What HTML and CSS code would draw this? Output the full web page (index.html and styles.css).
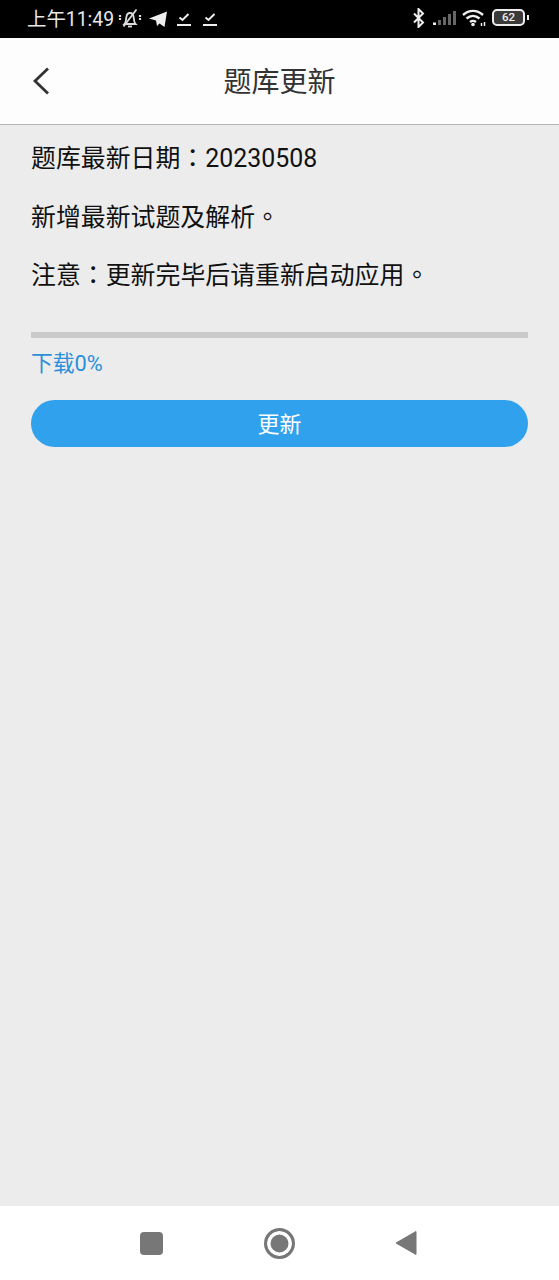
FILE: index.html
```html
<!DOCTYPE html>
<html lang="zh-CN">
<head>
  <meta charset="UTF-8">
  <meta name="viewport" content="width=device-width, initial-scale=1.0">
  <title>题库更新</title>
  <link rel="stylesheet" href="styles.css">
</head>
<body>

  <!-- Status bar -->
  <div class="status-bar">
    <div class="status-left">
      <span class="status-time">上午11:49</span>
      <svg class="ic-bell" width="24" height="22" viewBox="0 0 24 22" fill="none" stroke="#ddd" stroke-width="1.800">
        <path d="M6.500 16c1.500-1.500 1.500-4 1.800-6.500C8.600 6.500 10 5 12 5s3.400 1.500 3.700 4.500c.3 2.500.3 5 1.800 6.500z"/>
        <path d="M10 18.500h4"/>
        <path d="M5.500 18.500L18.500 1.500"/>
        <path d="M2 7v6M22 7v6" stroke-width="2.200" stroke-dasharray="2 1"/>
      </svg>
      <svg class="ic-send" width="18" height="16" viewBox="0 0 18 16">
        <path d="M0 7.500L18 0.500 15.500 16l-5-3.500-2.500 2.500-1-5.500z" fill="#eee"/>
      </svg>
      <svg class="ic-check" width="14" height="16" viewBox="0 0 14 16" fill="none" stroke="#eee" stroke-width="2">
        <path d="M2.500 6.500l3 2.500L11.500 3"/>
        <path d="M0 14h14"/>
      </svg>
      <svg class="ic-check" width="14" height="16" viewBox="0 0 14 16" fill="none" stroke="#eee" stroke-width="2">
        <path d="M2.500 6.500l3 2.500L11.500 3"/>
        <path d="M0 14h14"/>
      </svg>
    </div>
    <div class="status-right">
      <svg width="14" height="20" viewBox="0 0 14 20" fill="none" stroke="#eee" stroke-width="2">
        <path d="M2 5.500l9 9-4.500 4.500V1l4.500 4.500-9 9"/>
      </svg>
      <svg width="24" height="16" viewBox="0 0 24 16" fill="#666">
        <rect x="1" y="12.500" width="3" height="2.500" fill="#eee"/>
        <rect x="6" y="10" width="3" height="5"/>
        <rect x="11" y="7" width="3" height="8"/>
        <rect x="16" y="4" width="3" height="11"/>
        <rect x="21" y="1" width="3" height="14"/>
      </svg>
      <svg width="24" height="18" viewBox="0 0 24 18" fill="none" stroke="#eee" stroke-width="2.400">
        <path d="M1 6c6-5.500 14-5.500 20 0"/>
        <path d="M4.500 9.500c4-3.500 9-3.500 13 0"/>
        <path d="M8 13c2-1.500 4-1.500 6 0"/>
        <circle cx="11" cy="15.500" r="1.800" fill="#eee" stroke="none"/>
        <path d="M19.500 14v3M22.500 13v4" stroke-width="1.500"/>
      </svg>
      <div class="battery">
        <span class="battery-body">62</span>
        <span class="battery-tip"></span>
      </div>
    </div>
  </div>

  <!-- Title bar -->
  <header class="title-bar">
    <svg class="back-icon" width="18" height="28" viewBox="0 0 18 28" fill="none" stroke="#333" stroke-width="2.800">
      <path d="M16 1.500L3 14l13 12.500"/>
    </svg>
    <h1>题库更新</h1>
  </header>

  <main class="content">
    <p class="line">题库最新日期<span class="punct" lang="zh-Hant">：</span>20230508</p>
    <p class="line">新增最新试题及解析<span class="punct" lang="zh-Hant">。</span></p>
    <p class="line">注意<span class="punct" lang="zh-Hant">：</span>更新完毕后请重新启动应用<span class="punct" lang="zh-Hant">。</span></p>

    <div class="progress"></div>
    <div class="progress-label">下载0%</div>
    <button class="update-btn">更新</button>
  </main>

  <!-- Android nav -->
  <nav class="nav-bar">
    <span class="nav-square"></span>
    <span class="nav-home"></span>
    <svg width="22" height="26" viewBox="0 0 22 26">
      <path d="M1 13L21 1.500v23z" fill="#777" stroke="#777" stroke-linejoin="round"/>
    </svg>
  </nav>

</body>
</html>
```

FILE: styles.css
```css
* {
  box-sizing: border-box;
}

body {
  margin: 0;
  height: 1280px;
  display: flex;
  flex-direction: column;
  background: #ececec;
  font-family: "Roboto", "Noto Sans CJK SC", sans-serif;
}

.status-bar {
  height: 38px;
  background: #000;
  color: #e8e8e8;
  display: flex;
  justify-content: space-between;
  align-items: center;
  padding: 0 30px 3px 27px;
}

.status-left,
.status-right {
  display: flex;
  align-items: center;
}

.status-left {
  gap: 4px;
}

.status-time {
  font-size: 19.4px;
}

.ic-bell {
  margin-top: 2px;
}

.ic-send {
  margin: 3px 0 0 3px;
}

.ic-check {
  margin: 3px 0 0 6px;
}

.ic-check + .ic-check {
  margin-left: 8px;
}

.status-right {
  gap: 6px;
}

.battery {
  display: flex;
  align-items: center;
  gap: 2px;
}

.battery-body {
  width: 33px;
  height: 17px;
  border: 2px solid #eee;
  border-radius: 5px;
  font-size: 11.500px;
  font-weight: 500;
  line-height: 13px;
  text-align: center;
  color: #eee;
  background: #3a3a3a;
}

.battery-tip {
  width: 2px;
  height: 5px;
  background: #eee;
}

.title-bar {
  height: 87px;
  background: #fdfdfd;
  border-bottom: 1px solid #b4b4b4;
  display: flex;
  align-items: center;
  justify-content: center;
  padding-bottom: 2px;
  position: relative;
}

.title-bar h1 {
  margin: 0;
  font-size: 28px;
  font-weight: 400;
  color: #333;
}

.back-icon {
  position: absolute;
  left: 32px;
  top: 29px;
}

.content {
  flex: 1;
  padding: 17px 31px 0;
}

.line {
  margin: 0 0 25.500px;
  font-size: 24.900px;
  line-height: 33px;
  color: #111;
}

/* centred full-width punctuation, as on the device */
.punct {
  font-family: "Noto Sans CJK TC", sans-serif;
  line-height: 0;
}

.progress {
  height: 6px;
  margin-top: 39.500px;
  background: #c9c9c9;
}

.progress-label {
  margin-top: 12px;
  font-size: 21.800px;
  line-height: 28px;
  color: #2a90dc;
}

.update-btn {
  display: block;
  width: 100%;
  height: 47px;
  margin-top: 22px;
  padding: 0 0 2px;
  border: 0;
  border-radius: 24px;
  background: #30a1ec;
  color: #fff;
  font-family: inherit;
  font-size: 22px;
}

.nav-bar {
  height: 74px;
  background: #fff;
  display: flex;
  justify-content: center;
  align-items: center;
  gap: 100px;
  padding-right: 3px;
}

.nav-square {
  width: 23px;
  height: 23px;
  border-radius: 4px;
  background: #777;
  margin-right: 1px;
}

.nav-home {
  width: 31px;
  height: 31px;
  border: 3px solid #777;
  border-radius: 50%;
  background: #777;
  box-shadow: inset 0 0 0 3.500px #fff;
}
```
